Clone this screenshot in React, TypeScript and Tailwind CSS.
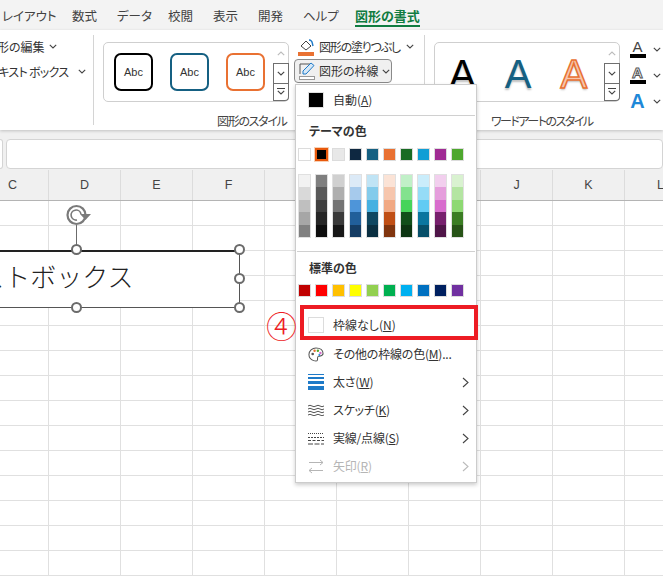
import React from "react";

const Chev = ({ className = "" }: { className?: string }) => (
  <svg width="8" height="5" viewBox="0 0 8 5" className={className} fill="none" stroke="#444" strokeWidth="1.1"><path d="M0.8 0.8 L4 4 L7.2 0.8" /></svg>
);

const ChevUp = () => (
  <svg width="8" height="5" viewBox="0 0 8 5" fill="none" stroke="#bbb" strokeWidth="1.1"><path d="M0.8 4.2 L4 1 L7.2 4.2" /></svg>
);

const Scroller = () => (
  <div className="flex flex-col w-[15px] shrink-0">
    <div className="h-[21px] flex items-center justify-center"><ChevUp /></div>
    <div className="h-[21px] flex items-center justify-center border border-[#6f6f6f] bg-white -mr-px"><Chev /></div>
    <div className="h-[18px] flex flex-col items-center justify-center gap-[1px] border border-t-0 border-[#6f6f6f] rounded-br-[4px] -mr-px">
      <div className="w-[8px] h-px bg-[#444]" />
      <Chev />
    </div>
  </div>
);

const StyleAbc = ({ color }: { color: string }) => (
  <div className="w-[39px] h-[38px] rounded-[7px] border-2 flex items-center justify-center bg-white" style={{ borderColor: color }}>
    <span className="text-[11px] text-[#333] font-['Liberation_Sans',sans-serif]">Abc</span>
  </div>
);

const ArtA = ({ fill, stroke, sw = 0 }: { fill: string; stroke?: string; sw?: number }) => (
  <span
    className="block text-[40px] leading-none font-['Liberation_Sans',sans-serif] [text-shadow:0_2px_2px_rgba(0,0,0,0.25)]"
    style={{ color: fill, WebkitTextStroke: sw ? `${sw}px ${stroke}` : undefined }}
  >
    A
  </span>
);

const theme = ["#ffffff", "#000000", "#e8e8e8", "#0e2841", "#156082", "#e97132", "#196b24", "#0f9ed5", "#a02b93", "#4ea72e"];
const shades = [
  ["#f2f2f2", "#d9d9d9", "#bfbfbf", "#a6a6a6", "#808080"],
  ["#7f7f7f", "#595959", "#3f3f3f", "#262626", "#0d0d0d"],
  ["#d0d0d0", "#aeaeae", "#747474", "#3a3a3a", "#171717"],
  ["#dceaf7", "#a6caec", "#4e95d9", "#215f9a", "#153d64"],
  ["#c0e4f5", "#83cbeb", "#46b1e1", "#0f4761", "#0a2f41"],
  ["#fbe3d6", "#f6c6ad", "#f1a983", "#c04f15", "#80350e"],
  ["#c1f0c8", "#83e28e", "#47d45a", "#124f1a", "#0d3512"],
  ["#caedfb", "#95dcf7", "#61cbf3", "#0b769f", "#074f69"],
  ["#f2cfee", "#e59edc", "#d86dcd", "#77206d", "#4f1548"],
  ["#d9f2d0", "#b4e5a2", "#8ed973", "#3b7d23", "#275317"],
];
const standard = ["#c00000", "#ff0000", "#ffc000", "#ffff00", "#92d050", "#00b050", "#00b0f0", "#0070c0", "#002060", "#7030a0"];

const Swatch = ({ c, active }: { c: string; active?: boolean }) => (
  <div
    className={active ? "w-[13px] h-[13px] border-2 border-[#e8590c] outline outline-1 outline-[#f7d0b5]" : "w-[13px] h-[13px] border border-[#dcdcdc]"}
    style={{ background: c }}
  />
);

const Item = ({ icon, label, u, rest = ")", arrow, disabled }: { icon: React.ReactNode; label: string; u: string; rest?: string; arrow?: boolean; disabled?: boolean }) => (
  <div className={`h-[28px] flex items-center pl-[12px] pr-[7px] ${disabled ? "text-[#b5b5b5]" : "text-[#333]"}`}>
    <div className="w-[16px] h-[20px] flex items-center justify-center shrink-0">{icon}</div>
    <span className="ml-[9px] text-[12px] flex-1 whitespace-nowrap tracking-[-0.2px]">
      {label}(<span className="underline">{u}</span>{rest}
    </span>
    {arrow && (
      <svg width="7" height="11" viewBox="0 0 7 11" fill="none" stroke={disabled ? "#bbb" : "#444"} strokeWidth="1.1"><path d="M1 1 L6 5.5 L1 10" /></svg>
    )}
  </div>
);

const Handle = ({ className }: { className: string }) => (
  <div className={`absolute w-[11px] h-[11px] rounded-full bg-white border-2 border-[#6b6b6b] ${className}`} />
);

const letters = ["C", "D", "E", "F", "G", "H", "I", "J", "K", "L"];

export default function App() {
  return (
    <div className="relative w-[663px] h-[579px] overflow-hidden bg-white flex flex-col text-[#333] font-['Noto_Sans_CJK_JP','Noto_Sans',sans-serif] [font-feature-settings:'palt']">
      {/* tabs */}
      <div className="h-[30px] bg-[#f3f3f3] flex items-start shrink-0 pt-[6px] text-[12.5px] leading-[19px] text-[#424242] whitespace-nowrap pl-[2px]">
        <span className="w-[70px]">レイアウト</span>
        <span className="w-[45px]">数式</span>
        <span className="w-[51px]">データ</span>
        <span className="w-[45px]">校閲</span>
        <span className="w-[45px]">表示</span>
        <span className="w-[45px]">開発</span>
        <span className="w-[52px]">ヘルプ</span>
        <span className="font-bold text-[13px] text-[#107c41] h-[19px] border-b-2 border-[#107c41] box-content">図形の書式</span>
      </div>

      {/* ribbon */}
      <div className="h-[100px] bg-white flex shrink-0 overflow-hidden text-[12px] text-[#333] whitespace-nowrap shadow-[0_1px_3px_rgba(0,0,0,0.2)] relative z-10">
        <div className="w-[93px] shrink-0 flex flex-col pt-[4px]">
          <div className="h-[25px] flex items-center ml-[-15px] gap-[4px]"><span>図形の編集</span><Chev /></div>
          <div className="h-[25px] flex items-center ml-[-12px] gap-[10px]"><span className="tracking-[-0.7px]">テキスト ボックス</span><Chev /></div>
        </div>
        <div className="w-px bg-[#d4d4d4] my-[5px] shrink-0" />
        <div className="w-[330px] shrink-0 flex flex-col">
          <div className="flex h-[84px]">
            <div className="ml-[9px] mt-[12px] w-[186px] h-[60px] border border-[#cfcfcf] rounded-[5px] flex">
              <div className="flex-1 flex items-center pl-[10px] gap-[17px]">
                <StyleAbc color="#000000" />
                <StyleAbc color="#156082" />
                <StyleAbc color="#e97132" />
              </div>
              <Scroller />
            </div>
            <div className="ml-[6px] flex flex-col pt-[4px]">
              <div className="h-[25px] flex items-center pl-[3px] gap-[4px]">
                <svg width="17" height="18" viewBox="0 0 17 18">
                  <path d="M3 8 L8 3 L13 8 L8 12 Z" fill="none" stroke="#444" strokeWidth="1" />
                  <path d="M11 2 Q14 2 14.5 6 L15 8" fill="none" stroke="#1e7ac8" strokeWidth="1.4" />
                  <rect x="0" y="14" width="16" height="4" fill="#e97132" />
                </svg>
                <span className="tracking-[-1.2px]">図形の塗りつぶし</span>
                <Chev className="ml-[2px]" />
              </div>
              <div className="h-[24px] w-[98px] -ml-[1px] flex items-center pl-[4px] gap-[3px] bg-[#f0f0f0] border border-[#8a8a8a] rounded-[4px]">
                <svg width="17" height="18" viewBox="0 0 17 18">
                  <path d="M1 12 V2 H11" fill="none" stroke="#555" strokeWidth="1" />
                  <path d="M4 12 L4 9 L12 1 L15 3.5 L7 12 Z" fill="#d6e8f7" stroke="#1e7ac8" strokeWidth="1" />
                  <rect x="0.5" y="14.5" width="15" height="3" fill="#fff" stroke="#999" />
                </svg>
                <span>図形の枠線</span>
                <Chev />
              </div>
            </div>
          </div>
          <span className="ml-[123px] mt-[-1px] leading-[16px] text-[#444] tracking-[-1.3px]">図形のスタイル</span>
        </div>
        <div className="w-px bg-[#d4d4d4] my-[5px] shrink-0" />
        <div className="flex-1 flex flex-col min-w-0">
          <div className="flex h-[84px]">
            <div className="ml-[9px] mt-[12px] w-[186px] h-[60px] border border-[#cfcfcf] rounded-[5px] flex shrink-0">
              <div className="flex-1 flex items-center pl-[14px] gap-[29px] pt-[3px] overflow-hidden">
                <ArtA fill="#000" />
                <ArtA fill="#156082" />
                <ArtA fill="#f6c6ad" stroke="#e97132" sw={1.5} />
              </div>
              <Scroller />
            </div>
            <div className="ml-[9px] flex flex-col pt-[7px] gap-[2px]">
              {["#000", "#000", ""].map((c, i) => (
                <div key={i} className="h-[24px] flex items-center gap-[7px]">
                  <div className="w-[17px] flex flex-col items-center">
                    <span
                      className={`leading-[14px] font-['Liberation_Sans',sans-serif] ${i === 2 ? "text-[20px] leading-[20px] font-bold text-[#1e88d8]" : i === 1 ? "text-[15px] font-bold text-white [-webkit-text-stroke:1px_#555]" : "text-[15px] text-[#444]"}`}
                    >
                      A
                    </span>
                    {c && <div className="w-[16px] h-[4px]" style={{ background: c }} />}
                  </div>
                  <Chev />
                </div>
              ))}
            </div>
          </div>
          <div className="flex items-center mt-[-1px]">
            <span className="ml-[66px] leading-[16px] text-[#444] tracking-[-1.5px]">ワードアートのスタイル</span>
            <div className="ml-[70px] w-[6px] h-[7px] border-l border-t border-[#666]" />
          </div>
        </div>
      </div>

      {/* formula bar */}
      <div className="h-[40px] shrink-0 bg-[#f0f0f0] flex gap-[3px] pt-[9px] pb-[1px] pl-0">
        <div className="w-[3px] bg-white border border-l-0 border-[#d4d4d4] rounded-r-[3px]" />
        <div className="flex-1 bg-white border border-[#d4d4d4] rounded-[4px]" />
      </div>

      {/* column headers */}
      <div className="h-[31px] shrink-0 bg-[#f0f0f0] border-b border-[#b4b4b4] flex ml-[-23px] text-[12.5px] text-[#444]">
        {letters.map((l) => (
          <div key={l} className="w-[72px] shrink-0 flex items-center justify-center border-r border-[#dcdcdc] font-['Liberation_Sans',sans-serif]">{l}</div>
        ))}
      </div>

      {/* grid */}
      <div className="flex-1 ml-[-23px] grid grid-cols-[repeat(10,72px)] auto-rows-[25px] overflow-hidden content-start">
        {Array.from({ length: 150 }).map((_, i) => (
          <div key={i} className="border-r border-b border-[#e0e0e0]" />
        ))}
      </div>

      {/* rotation handle and text box */}
      <div className="absolute left-[64px] top-[203px]">
        <svg width="28" height="24" viewBox="0 0 28 24" fill="none">
          <circle cx="12.5" cy="12" r="9" stroke="#7a7a7a" strokeWidth="2.2" />
          <path d="M17 11 A5 5 0 1 0 13 17" stroke="#7a7a7a" strokeWidth="1.6" />
          <path d="M16 11 H27 L21.5 17 Z" fill="#7a7a7a" />
        </svg>
      </div>
      <div className="absolute left-[76px] top-[225px] w-px h-[25px] bg-[#6b6b6b]" />
      <div className="absolute left-[-100px] top-[250px] w-[340px] h-[58px] bg-white border border-[#555] border-t-2 border-t-[#222] flex items-center pb-[8px]">
        <span className="ml-[26px] text-[26px] leading-none text-[#222] whitespace-nowrap [font-feature-settings:normal] font-light">テキストボックス</span>
      </div>
      <Handle className="left-[71px] top-[244px]" />
      <Handle className="left-[234px] top-[244px]" />
      <Handle className="left-[234px] top-[273px]" />
      <Handle className="left-[71px] top-[302px]" />
      <Handle className="left-[234px] top-[302px]" />

      {/* dropdown menu */}
      <div className="absolute z-20 left-[295px] top-[84px] w-[182px] h-[399px] bg-white border border-[#cccccc] shadow-[0_2px_4px_rgba(0,0,0,0.2)] flex flex-col text-[#333]">
        <div className="h-[30px] flex items-center pl-[12px] shrink-0">
          <div className="w-[16px] h-[16px] bg-black border border-[#e0e0e0]" />
          <span className="ml-[9px] text-[12px]">自動(<span className="underline">A</span>)</span>
        </div>
        <div className="h-px bg-[#d0d0d0] mx-[1px] shrink-0" />
        <div className="h-[32px] flex items-center pl-[13px] pb-[3px] text-[12px] font-bold text-[#333] shrink-0">テーマの色</div>
        <div className="flex gap-[4px] pl-[2px] shrink-0">
          {theme.map((c, i) => <Swatch key={c} c={c} active={i === 1} />)}
        </div>
        <div className="flex gap-[4px] pl-[2px] mt-[13px] shrink-0">
          {shades.map((col, i) => (
            <div key={i} className="w-[13px] h-[64px] flex flex-col border border-[#e0e0e0]">
              {col.map((c) => <div key={c} className="flex-1" style={{ background: c }} />)}
            </div>
          ))}
        </div>
        <div className="h-px bg-[#d0d0d0] mx-[1px] mt-[13px] shrink-0" />
        <div className="h-[32px] flex items-center pl-[13px] pb-[1px] text-[12px] font-bold text-[#333] shrink-0">標準の色</div>
        <div className="flex gap-[4px] pl-[2px] shrink-0">
          {standard.map((c) => <Swatch key={c} c={c} />)}
        </div>
        <div className="mt-[14px] flex flex-col">
          <div className="h-[28px] flex items-center pl-[12px] mb-[1px]">
            <div className="w-[16px] h-[16px] bg-white border border-[#dcdcdc]" />
            <span className="ml-[9px] text-[12px]">枠線なし(<span className="underline">N</span>)</span>
          </div>
          <Item
            label="その他の枠線の色"
            u="M"
            rest=")..."
            icon={
              <svg width="17" height="17" viewBox="0 0 17 17">
                <path d="M8.5 1.5 C13 1.5 16 4 16 7.5 C16 10.5 12.5 10 11 10.5 C9.5 11 10.5 13 10 14.5 C9.5 16 7.5 15.5 6 15 C3 14 1 11.5 1 8.5 C1 4.5 4.5 1.5 8.5 1.5 Z" fill="#fff" stroke="#555" strokeWidth="1.1" />
                <circle cx="5" cy="8" r="1.4" fill="#555" />
                <circle cx="7" cy="4.5" r="1.3" fill="#e97132" />
                <circle cx="10.5" cy="4.5" r="1.3" fill="#4ea72e" />
                <circle cx="13.2" cy="7" r="1.3" fill="#d86dcd" />
                <circle cx="12" cy="9" r="1" fill="#1e88d8" />
              </svg>
            }
          />
          <Item
            label="太さ"
            u="W"
            arrow
            icon={
              <svg width="16" height="16" viewBox="0 0 16 16" fill="#1e7ac8">
                <rect y="0" width="16" height="1" />
                <rect y="3" width="16" height="2" />
                <rect y="7" width="16" height="3" />
                <rect y="12" width="16" height="4" />
              </svg>
            }
          />
          <Item
            label="スケッチ"
            u="K"
            arrow
            icon={
              <svg width="16" height="12" viewBox="0 0 16 12" fill="none" stroke="#555" strokeWidth="1">
                <path d="M0 2 Q2 0.5 4 2 T8 2 T12 2 T16 2" />
                <path d="M0 5 Q2 3.5 4 5 T8 5 T12 5 T16 5" />
                <path d="M0 8 Q2 6.5 4 8 T8 8 T12 8 T16 8" />
                <path d="M0 11 Q2 9.5 4 11 T8 11 T12 11 T16 11" />
              </svg>
            }
          />
          <Item
            label="実線/点線"
            u="S"
            arrow
            icon={
              <svg width="16" height="13" viewBox="0 0 16 13" fill="none" stroke="#444" strokeWidth="1">
                <path d="M0 1.5 H16" strokeDasharray="1 1" />
                <path d="M0 5.5 H16" strokeDasharray="2 1" />
                <path d="M0 8.5 H16" strokeDasharray="3 1.5" />
                <path d="M0 12 H16" strokeDasharray="5 1.5" />
              </svg>
            }
          />
          <Item
            label="矢印"
            u="R"
            arrow
            disabled
            icon={
              <svg width="16" height="15" viewBox="0 0 16 15" fill="none" stroke="#b5b5b5" strokeWidth="1">
                <path d="M1 3.5 H15 M12 1 L15 3.5 L12 6" />
                <path d="M15 11.5 H1 M4 9 L1 11.5 L4 14" />
              </svg>
            }
          />
        </div>
      </div>

      {/* annotation */}
      <div className="absolute z-30 left-[300px] top-[305px] w-[178px] h-[35px] border-[4px] border-[#ed1c24]" />
      <span className="absolute z-30 left-[266px] top-[307px] text-[#ed1c24] text-[31px] leading-[36px] font-light [font-feature-settings:normal]">④</span>
    </div>
  );
}
